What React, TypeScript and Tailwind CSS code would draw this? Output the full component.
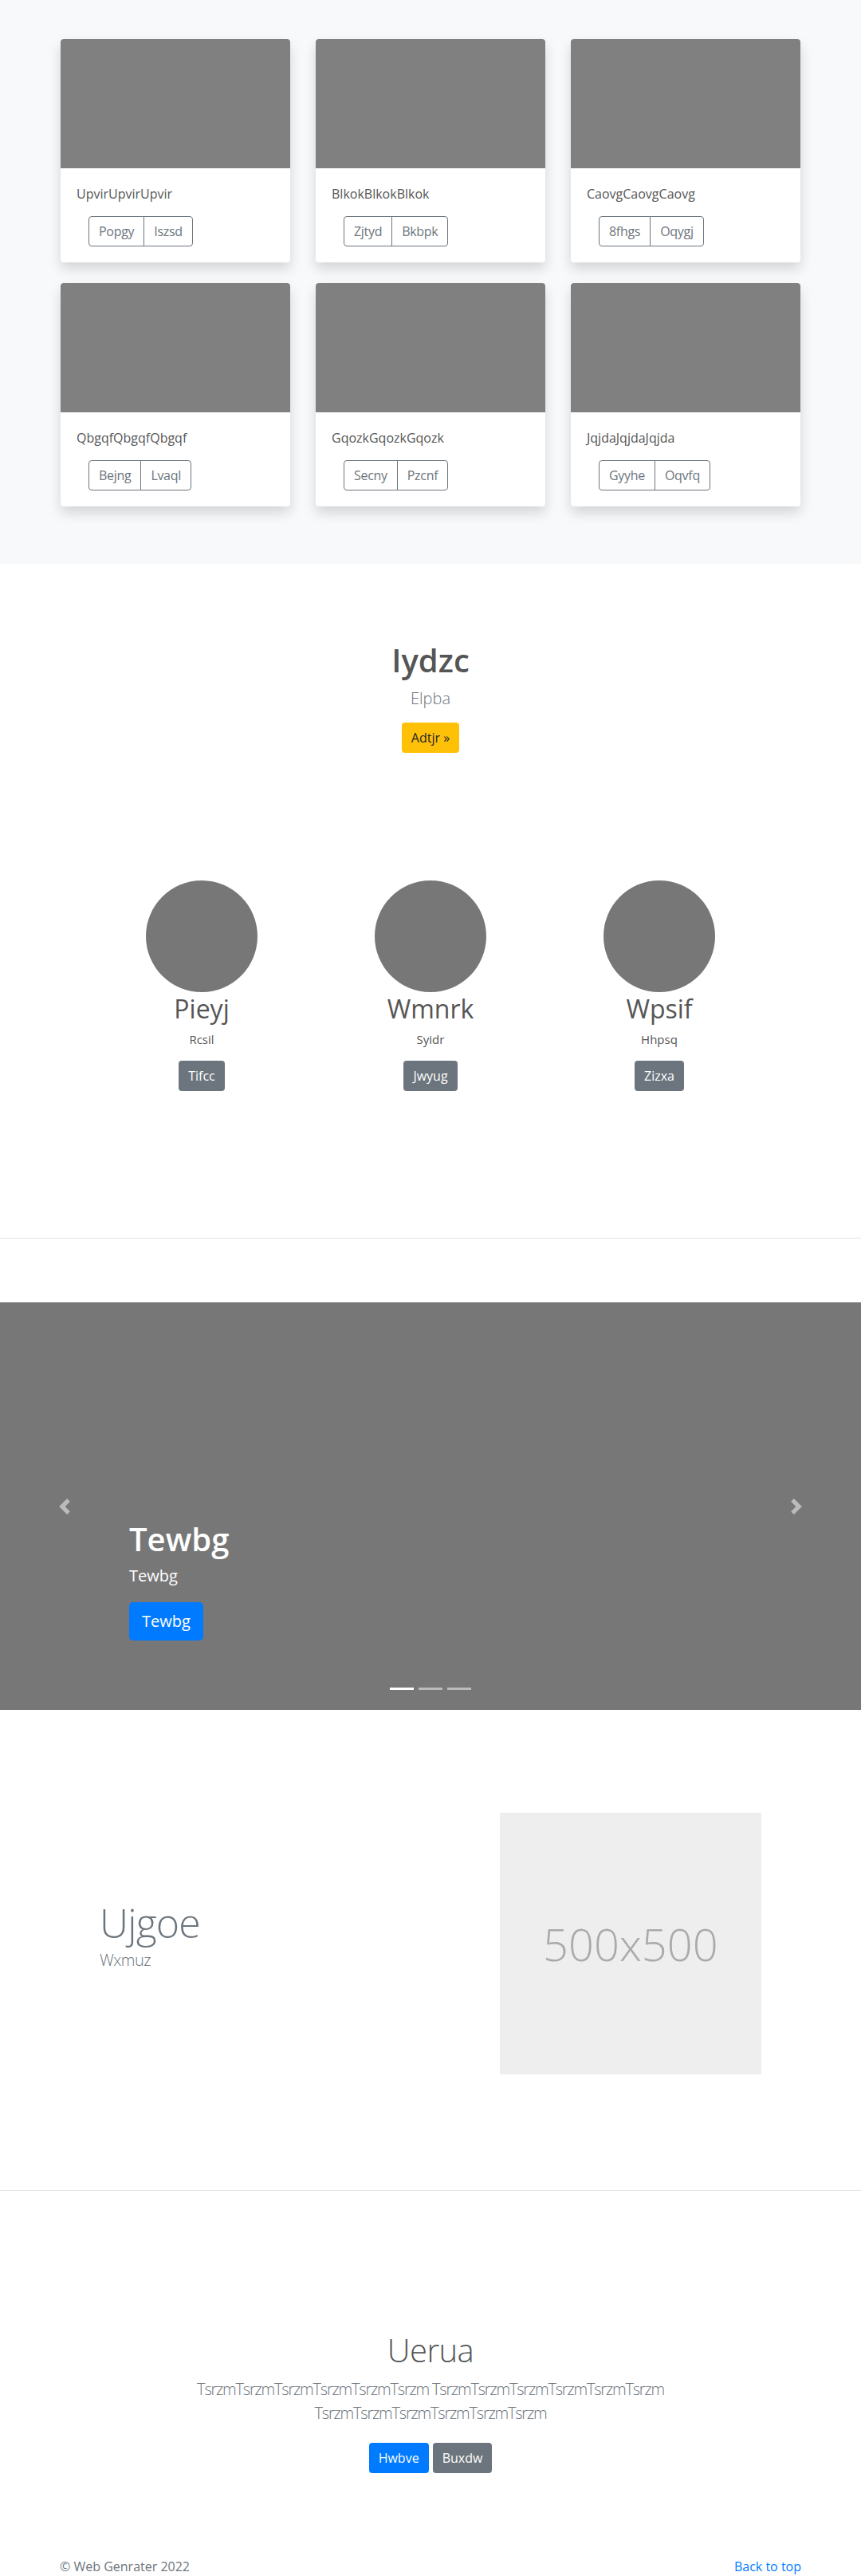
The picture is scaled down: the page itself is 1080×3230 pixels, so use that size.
import React from "react";

const cards = [
  { title: "UpvirUpvirUpvir", a: "Popgy", b: "Iszsd" },
  { title: "BlkokBlkokBlkok", a: "Zjtyd", b: "Bkbpk" },
  { title: "CaovgCaovgCaovg", a: "8fhgs", b: "Oqygj" },
  { title: "QbgqfQbgqfQbgqf", a: "Bejng", b: "Lvaql" },
  { title: "GqozkGqozkGqozk", a: "Secny", b: "Pzcnf" },
  { title: "JqjdaJqjdaJqjda", a: "Gyyhe", b: "Oqvfq" },
];

const team = [
  { name: "Pieyj", sub: "Rcsil", btn: "Tifcc" },
  { name: "Wmnrk", sub: "Syidr", btn: "Jwyug" },
  { name: "Wpsif", sub: "Hhpsq", btn: "Zizxa" },
];

function Card({ title, a, b }: { title: string; a: string; b: string }) {
  return (
    <div className="bg-white rounded-[4px] overflow-hidden shadow-[0_8px_16px_rgba(0,0,0,0.15)]">
      <div className="h-[162px] bg-[#808080]" />
      <div className="px-5 pt-5 pb-5">
        <p className="text-[16px] leading-6 text-[#555] mb-4">{title}</p>
        <div className="ml-[15px] inline-flex">
          <button className="h-[38px] px-3 text-[16px] tracking-[-0.3px] text-[#6c757d] border border-[#6c757d] rounded-l-[4px]">
            {a}
          </button>
          <button className="h-[38px] px-3 text-[16px] tracking-[-0.3px] text-[#6c757d] border border-[#6c757d] -ml-px rounded-r-[4px]">
            {b}
          </button>
        </div>
      </div>
    </div>
  );
}

export default function App() {
  return (
    <div className="font-['Open_Sans',sans-serif] text-[16px] bg-white h-[3230px] overflow-hidden">
      {/* Album cards */}
      <section className="bg-[#f8f9fa] pt-[49px] pb-[72px]">
        <div className="w-[928px] mx-auto grid grid-cols-3 gap-x-8 gap-y-[26px]">
          {cards.map((c) => (
            <Card key={c.title} {...c} />
          ))}
        </div>
      </section>

      {/* Hero */}
      <section className="pt-[97px] text-center">
        <h1 className="text-[40px] leading-[48px] font-semibold text-[#555]">Iydzc</h1>
        <p className="mt-[9px] text-[20px] leading-[30px] font-light text-[#6c757d]">Elpba</p>
        <button className="mt-[15px] h-[38px] px-3 rounded-[4px] bg-[#ffc107] text-[#212529] text-[16px]">
          Adtjr »
        </button>
      </section>

      {/* Team */}
      <section className="pt-[160px]">
        <div className="w-[861px] mx-auto grid grid-cols-3 text-center">
          {team.map((t) => (
            <div key={t.name} className="flex flex-col items-center">
              <div className="w-[140px] h-[140px] rounded-full bg-[#777]" />
              <h2 className="mt-[2px] text-[32px] leading-[38px] text-[#555]">{t.name}</h2>
              <p className="mt-[7px] text-[15px] leading-6 text-[#555]">{t.sub}</p>
              <button className="mt-[15px] h-[38px] px-3 rounded-[4px] bg-[#6c757d] text-white text-[16px]">
                {t.btn}
              </button>
            </div>
          ))}
        </div>
      </section>

      <hr className="mt-[184px] border-0 border-t border-black/10" />

      {/* Carousel */}
      <section className="mt-[80px] relative h-[511px] bg-[#777]">
        <div className="absolute left-0 top-0 bottom-0 w-[162px] flex items-center justify-center opacity-50">
          <svg width="20" height="20" viewBox="0 0 8 8" fill="#fff">
            <path d="M5.25 0l-4 4 4 4 1.5-1.5L4.25 4l2.5-2.5L5.25 0z" />
          </svg>
        </div>
        <div className="absolute right-0 top-0 bottom-0 w-[162px] flex items-center justify-center opacity-50">
          <svg width="20" height="20" viewBox="0 0 8 8" fill="#fff">
            <path d="M2.75 0l-1.5 1.5L3.75 4l-2.5 2.5L2.75 8l4-4-4-4z" />
          </svg>
        </div>
        <div className="absolute left-[162px] right-[162px] top-[273px] text-white">
          <h1 className="text-[40px] leading-[48px] font-semibold">Tewbg</h1>
          <p className="mt-[7px] text-[20px] leading-[30px]">Tewbg</p>
          <button className="mt-[18px] h-[48px] px-4 rounded-[5px] bg-[#007bff] text-white text-[20px]">
            Tewbg
          </button>
        </div>
        <div className="absolute bottom-[25px] left-0 right-0 flex justify-center gap-[6px]">
          <span className="w-[30px] h-[3px] bg-white" />
          <span className="w-[30px] h-[3px] bg-white/50" />
          <span className="w-[30px] h-[3px] bg-white/50" />
        </div>
      </section>

      {/* Featurette */}
      <section className="pt-[129px]">
        <div className="w-[860px] mx-auto flex items-center">
          <div className="w-7/12 px-[15px] pb-4">
            <h2 className="text-[50px] leading-[50px] font-light tracking-[-0.05rem] text-[#6c757d]">Ujgoe</h2>
            <p className="mt-[7px] text-[20px] leading-[30px] font-light tracking-[-0.5px] text-[#6c757d]">Wxmuz</p>
          </div>
          <div className="w-5/12 px-[15px]">
            <div className="w-full aspect-square bg-[#eee] flex items-center justify-center">
              <span className="text-[56px] font-light text-[#aaa]">500x500</span>
            </div>
          </div>
        </div>
      </section>

      <hr className="mt-[145px] border-0 border-t border-black/10" />

      {/* CTA */}
      <section className="pt-[176px] text-center">
        <h1 className="text-[40px] leading-[48px] font-light tracking-[-0.5px] text-[#555]">Uerua</h1>
        <p className="mt-[10px] mx-auto max-w-[700px] text-[20px] leading-[30px] font-light tracking-[-1.2px] text-[#6c757d]">
          TsrzmTsrzmTsrzmTsrzmTsrzmTsrzm TsrzmTsrzmTsrzmTsrzmTsrzmTsrzm TsrzmTsrzmTsrzmTsrzmTsrzmTsrzm
        </p>
        <div className="mt-[22px] flex justify-center gap-[5px]">
          <button className="h-[38px] px-3 rounded-[4px] bg-[#007bff] text-white text-[16px]">Hwbve</button>
          <button className="h-[38px] px-3 rounded-[4px] bg-[#6c757d] text-white text-[16px]">Buxdw</button>
        </div>
      </section>

      {/* Footer */}
      <footer className="mt-[105px]">
        <div className="w-[960px] mx-auto px-[15px] flex justify-between text-[16px] leading-6">
          <span className="text-[#6c757d]">© Web Genrater 2022</span>
          <a className="text-[#007bff]">Back to top</a>
        </div>
      </footer>
    </div>
  );
}
